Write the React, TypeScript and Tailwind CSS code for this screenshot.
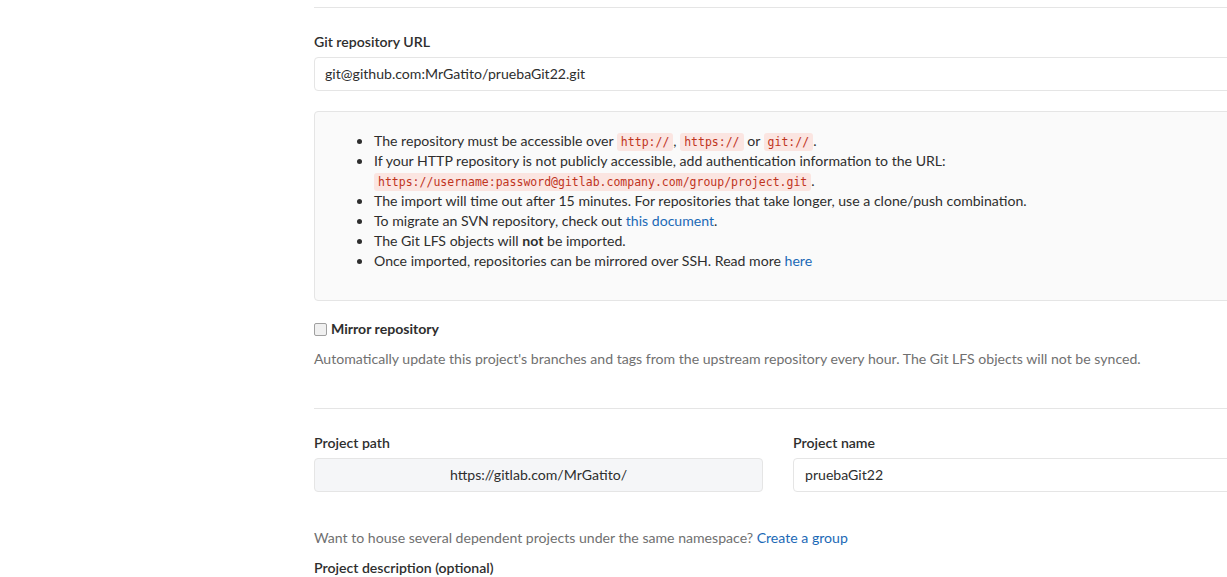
import React from "react";

const Code = ({ children }: { children: React.ReactNode }) => (
  <code className="rounded-[3px] bg-[#fbe5e1] px-[4px] py-[2px] font-['DejaVu_Sans_Mono',monospace] text-[11.5px] leading-[14px] text-[#c0341d]">
    {children}
  </code>
);

const Link = ({ children }: { children: React.ReactNode }) => (
  <a href="#" className="text-[#1b69b6]">
    {children}
  </a>
);

const Item = ({ children }: { children: React.ReactNode }) => (
  <li className="relative pl-[17px]">
    <span className="absolute left-0 top-[8px] h-[5px] w-[5px] rounded-full bg-[#2e2e2e]" />
    {children}
  </li>
);

export default function App() {
  return (
    <div className="min-h-[577px] w-[1227px] overflow-hidden bg-white font-['Lato',sans-serif] text-[14.1px] leading-[20px] text-[#2e2e2e]">
      <div className="ml-[314px] w-[1000px] pt-[7px]">
        <div className="border-t border-[#e5e5e5]" />

        <label className="mt-[24px] block font-semibold">Git repository URL</label>
        <div className="mt-[5px] flex h-[34px] items-center rounded-l-[4px] border border-[#e5e5e5] px-[10px] text-[#2e2e2e]">
          git@github.com:MrGatito/pruebaGit22.git
        </div>

        <div className="mt-[20px] h-[190px] rounded-[4px] border border-[#e5e5e5] bg-[#fafafa] pt-[19px] pl-[42px]">
          <ul>
            <Item>
              The repository must be accessible over <Code>http://</Code>, <Code>https://</Code> or{" "}
              <Code>git://</Code>.
            </Item>
            <Item>
              If your HTTP repository is not publicly accessible, add authentication information to the URL:
              <br />
              <Code>https://username:password@gitlab.company.com/group/project.git</Code>.
            </Item>
            <Item>The import will time out after 15 minutes. For repositories that take longer, use a clone/push combination.</Item>
            <Item>
              To migrate an SVN repository, check out <Link>this document</Link>.
            </Item>
            <Item>
              The Git LFS objects will <strong className="font-bold">not</strong> be imported.
            </Item>
            <Item>
              Once imported, repositories can be mirrored over SSH. Read more <Link>here</Link>
            </Item>
          </ul>
        </div>

        <div className="mt-[18px] flex items-center">
          <span className="mr-[4px] h-[13px] w-[13px] rounded-[2px] border border-[#a0a0a0] bg-[#f0f0f0]" />
          <span className="font-bold">Mirror repository</span>
        </div>
        <p className="mt-[10px] text-[#707070]">
          Automatically update this project's branches and tags from the upstream repository every hour. The Git LFS
          objects will not be synced.
        </p>

        <div className="mt-[39px] border-t border-[#e5e5e5]" />

        <div className="mt-[24px] flex gap-[30px]">
          <div className="w-[449px]">
            <label className="block font-semibold">Project path</label>
            <div className="mt-[5px] flex h-[34px] items-center justify-center rounded-[4px] border border-[#e5e5e5] bg-[#f5f6f8]">
              https://gitlab.com/MrGatito/
            </div>
          </div>
          <div className="flex-1">
            <label className="block font-semibold">Project name</label>
            <div className="mt-[5px] flex h-[34px] items-center rounded-[4px] border border-[#e5e5e5] px-[11px]">
              pruebaGit22
            </div>
          </div>
        </div>

        <p className="mt-[36px] text-[#707070]">
          Want to house several dependent projects under the same namespace? <Link>Create a group</Link>
        </p>
        <label className="mt-[10px] block font-semibold">Project description (optional)</label>
      </div>
    </div>
  );
}
